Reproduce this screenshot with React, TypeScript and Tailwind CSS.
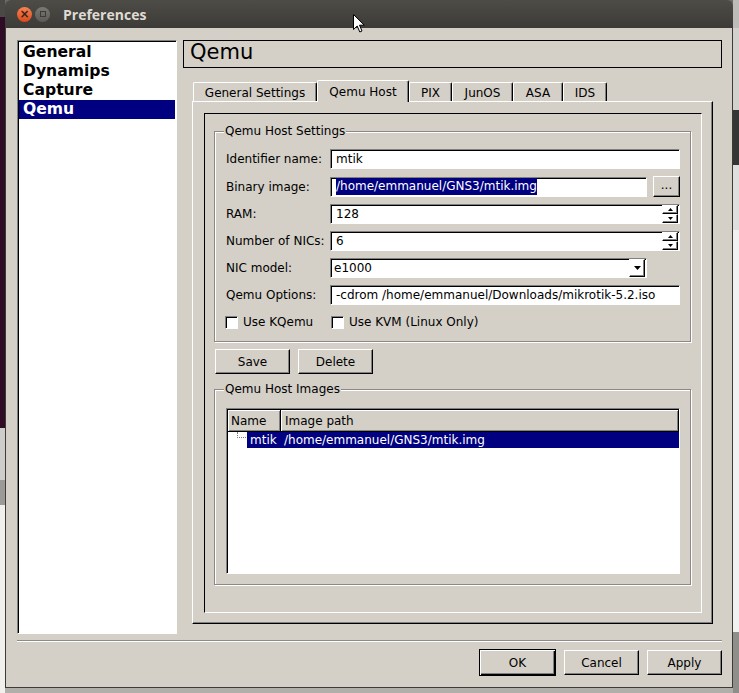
import React from "react";

const RAISED =
  "border border-t-white border-l-white border-r-black border-b-black shadow-[inset_-1px_-1px_0_#808080]";
const SUNKEN =
  "border border-t-[#808080] border-l-[#808080] border-r-white border-b-white shadow-[inset_1px_1px_0_#000]";
const ETCHED = "border border-[#8c8984] shadow-[inset_1px_1px_0_#fff,1px_1px_0_#fff]";

function Btn({ label, className = "" }: { label: string; className?: string }) {
  return <div className={`${RAISED} flex items-center justify-center ${className}`}>{label}</div>;
}

function Group({ title, className = "", children }: { title: string; className?: string; children?: React.ReactNode }) {
  return (
    <div className={`relative ${ETCHED} ${className}`}>
      <span className="absolute left-[9px] top-[-9px] px-[1px] bg-[#d4d0c8] leading-[16px]">{title}</span>
      {children}
    </div>
  );
}

function Field({ children, className = "" }: { children?: React.ReactNode; className?: string }) {
  return <div className={`${SUNKEN} bg-white h-[20px] flex items-center ${className}`}>{children}</div>;
}

function Tri({ up = false, w = 5, h = 3 }: { up?: boolean; w?: number; h?: number }) {
  return (
    <svg width={w} height={h} viewBox={`0 0 ${w} ${h}`}>
      <path d={up ? `M${w / 2} 0L${w} ${h}L0 ${h}Z` : `M0 0L${w} 0L${w / 2} ${h}Z`} fill="#000" />
    </svg>
  );
}

function Spin({ value }: { value: string }) {
  return (
    <Field className="justify-between">
      <span className="pl-[5px]">{value}</span>
      <div className="flex flex-col mr-[1px]">
        <div className={`${RAISED} w-[16px] h-[9px] flex items-center justify-center`}>
          <Tri up />
        </div>
        <div className={`${RAISED} w-[16px] h-[9px] flex items-center justify-center`}>
          <Tri />
        </div>
      </div>
    </Field>
  );
}

function Check({ label }: { label: string }) {
  return (
    <div className="flex items-center gap-[5px] h-[20px]">
      <div className={`${SUNKEN} bg-white w-[13px] h-[13px]`} />
      <span>{label}</span>
    </div>
  );
}

const TABS = [
  { label: "General Settings", w: "w-[124px]", active: false },
  { label: "Qemu Host", w: "w-[92px]", active: true },
  { label: "PIX", w: "w-[43px]", active: false },
  { label: "JunOS", w: "w-[61px]", active: false },
  { label: "ASA", w: "w-[50px]", active: false },
  { label: "IDS", w: "w-[44px]", active: false },
];

export default function App() {
  return (
    <div className="relative w-[739px] h-[693px] flex overflow-hidden text-[12px] text-black font-[family-name:'DejaVu_Sans',sans-serif]">
      {/* desktop, left */}
      <div className="w-[5px] flex flex-col">
        <div className="h-[17px] bg-[#4a4945]" />
        <div className="h-[411px] bg-[#2f0b25]" />
        <div className="h-[52px] bg-[#cfcdc9]" />
        <div className="h-[25px] bg-[#9c9a96]" />
        <div className="flex-1 bg-[#f2f0ec]" />
      </div>

      {/* window */}
      <div className="w-[728px] flex flex-col bg-[#6b6a66]">
        <div className="h-[28px] rounded-t-[6px] bg-gradient-to-b from-[#4d4c47] to-[#3c3b37] flex items-center pl-[12px]">
          <div className="w-[15px] h-[15px] rounded-full bg-gradient-to-b from-[#f7834f] to-[#d9491a] flex items-center justify-center text-[#3a2218] text-[12px] leading-none font-bold">
            ×
          </div>
          <div className="ml-[3px] w-[15px] h-[15px] rounded-full bg-gradient-to-b from-[#7a7974] to-[#5c5b57] flex items-center justify-center">
            <div className="w-[6px] h-[6px] border border-[#3c3b37]" />
          </div>
          <span className="ml-[13px] text-[#dfdbd2] text-[14px] font-bold font-[family-name:'Open_Sans',sans-serif]">
            Preferences
          </span>
        </div>

        <div className="h-[660px] bg-[#d4d0c8] border-l border-r border-b border-[#3c3b37] flex flex-col pl-[11px] pr-[10px] pt-[12px]">
          <div className="h-[594px] flex gap-[6px]">
            {/* category list */}
            <div className={`${SUNKEN} w-[160px] bg-white flex flex-col pt-[2px] px-[1px] font-bold text-[15.6px]`}>
              {["General", "Dynamips", "Capture", "Qemu"].map((c) => (
                <div
                  key={c}
                  className={`h-[19px] leading-[19px] pl-[4px] ${c === "Qemu" ? "bg-[#000080] text-white" : ""}`}
                >
                  {c}
                </div>
              ))}
            </div>

            {/* right side */}
            <div className="w-[539px] flex flex-col">
              <div className="h-[28px] border border-black flex items-center pl-[6px] pb-[3px] text-[21px]">Qemu</div>

              <div className="mt-[12px] ml-[10px] h-[21px] flex items-end">
                {TABS.map((t) => (
                  <div
                    key={t.label}
                    className={`${t.w} flex items-center justify-center border-t border-l border-r border-t-white border-l-white border-r-black shadow-[inset_-1px_0_0_#808080] rounded-t-[2px] bg-[#d4d0c8] ${
                      t.active ? "h-[22px] mb-[-1px] relative z-10" : "h-[19px] pt-[2px]"
                    }`}
                  >
                    {t.label}
                  </div>
                ))}
              </div>

              <div
                className={`flex-1 mb-[10px] ml-[9px] w-[521px] flex ${RAISED} pt-[11px] pl-[11px] pr-[10px] pb-[10px]`}
              >
                <div className="flex-1 border border-t-black border-l-black border-r-white border-b-white flex flex-col pl-[9px] pr-[10px] pt-[17px]">
                  <Group title="Qemu Host Settings" className="pt-[17px] pl-[11px] pr-[10px] pb-[9px]">
                    <div className="grid grid-cols-[104px_1fr] gap-y-[7px] items-center">
                      <span>Identifier name:</span>
                      <Field>
                        <span className="pl-[5px]">mtik</span>
                      </Field>

                      <span>Binary image:</span>
                      <div className="flex gap-[6px] items-center">
                        <Field className="flex-1">
                          <span className="ml-[5px] bg-[#000080] text-white leading-[17px]">
                            /home/emmanuel/GNS3/mtik.img
                          </span>
                        </Field>
                        <Btn label="..." className="w-[27px] h-[21px] pb-[4px]" />
                      </div>

                      <span>RAM:</span>
                      <Spin value="128" />

                      <span>Number of NICs:</span>
                      <Spin value="6" />

                      <span>NIC model:</span>
                      <div className="flex">
                        <Field className="w-[317px] justify-between">
                          <span className="pl-[3px]">e1000</span>
                          <div className={`${RAISED} w-[16px] h-[18px] mr-[1px] flex items-center justify-center`}>
                            <Tri w={7} h={4} />
                          </div>
                        </Field>
                      </div>

                      <span>Qemu Options:</span>
                      <Field>
                        <span className="pl-[5px]">-cdrom /home/emmanuel/Downloads/mikrotik-5.2.iso</span>
                      </Field>

                      <div className="-ml-[1px]">
                        <Check label="Use KQemu" />
                      </div>
                      <div className="ml-[1px]">
                        <Check label="Use KVM (Linux Only)" />
                      </div>
                    </div>
                  </Group>

                  <div className="mt-[7px] ml-[1px] flex gap-[8px]">
                    <Btn label="Save" className="w-[75px] h-[25px]" />
                    <Btn label="Delete" className="w-[75px] h-[25px]" />
                  </div>

                  <Group title="Qemu Host Images" className="mt-[15px] h-[196px] pt-[18px] pl-[11px] pr-[10px]">
                    <div className={`${SUNKEN} bg-white h-[166px] flex flex-col pl-[1px] pt-[1px]`}>
                      <div className="h-[22px] flex">
                        <div className="w-[53px] bg-[#d4d0c8] border-r border-b border-black shadow-[inset_1px_1px_0_#fff,inset_-1px_-1px_0_#808080] flex items-center pl-[3px]">
                          Name
                        </div>
                        <div className="flex-1 bg-[#d4d0c8] border-r border-b border-black shadow-[inset_1px_1px_0_#fff,inset_-1px_-1px_0_#808080] flex items-center pl-[4px]">
                          Image path
                        </div>
                      </div>
                      <div className="h-[16px] flex">
                        <div className="w-[19px] pl-[9px]">
                          <div className="w-[9px] h-[6px] border-l border-b border-dotted border-[#7a7a7a]" />
                        </div>
                        <div className="flex-1 bg-[#000080] text-white flex items-center">
                          <span className="w-[34px] pl-[3px]">mtik</span>
                          <span className="pl-[3px]">/home/emmanuel/GNS3/mtik.img</span>
                        </div>
                      </div>
                    </div>
                  </Group>
                </div>
              </div>
            </div>
          </div>

          {/* separator + dialog buttons */}
          <div className="mt-[6px] h-[2px] border-t border-t-[#8e8b86] border-b border-b-white" />
          <div className="mt-[7px] flex justify-end items-center gap-[8px] h-[27px]">
            <div className="w-[77px] h-[27px] border border-black shadow-[inset_1px_1px_0_#fff,inset_-1px_-1px_0_#000,inset_-2px_-2px_0_#808080] flex items-center justify-center">
              OK
            </div>
            <Btn label="Cancel" className="w-[75px] h-[25px]" />
            <Btn label="Apply" className="w-[75px] h-[25px]" />
          </div>
        </div>

        <div className="flex-1 bg-[#b1afaa]" />
      </div>

      {/* desktop, right */}
      <div className="w-[6px] flex flex-col">
        <div className="h-[28px] bg-[#bdbcb8]" />
        <div className="h-[82px] bg-[#d2d1cd]" />
        <div className="h-[55px] bg-[#353535]" />
        <div className="h-[65px] bg-[#dedede]" />
        <div className="h-[402px] bg-[#f1f1f1]" />
        <div className="flex-1 bg-[#8f8e8a]" />
      </div>

      {/* mouse pointer */}
      <svg className="absolute left-[353px] top-[14px]" width="12" height="19" viewBox="0 0 12 19">
        <path d="M0.5 0.5V15.5L4.2 12L6.8 18L9 17L6.5 11.2H11.3Z" fill="#fff" stroke="#000" strokeWidth="1" strokeLinejoin="round" />
      </svg>
    </div>
  );
}
